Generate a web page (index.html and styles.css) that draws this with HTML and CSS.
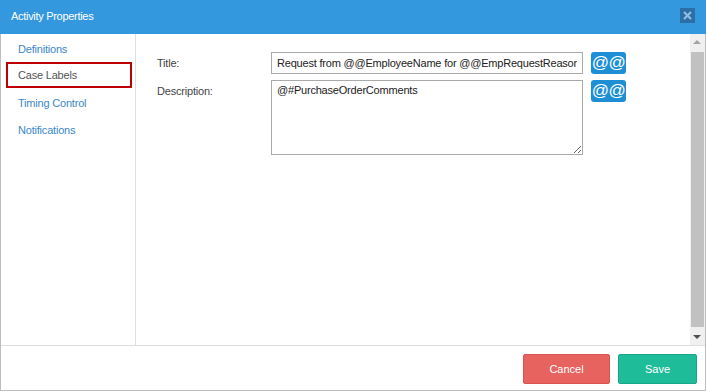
FILE: index.html
```html
<!DOCTYPE html>
<html>
<head>
<meta charset="utf-8">
<link rel="stylesheet" href="styles.css">
</head>
<body>
<div class="dialog">
  <div class="header">
    <span class="title">Activity Properties</span>
    <span class="close">
      <svg width="15" height="15" viewBox="0 0 15 15"><rect width="15" height="15" fill="#2c6ea6"/><path d="M4 4 L11 11 M11 4 L4 11" stroke="#8fbde6" stroke-width="2.2"/></svg>
    </span>
  </div>
  <div class="main">
    <div class="sidebar">
      <div class="nav-item">Definitions</div>
      <div class="nav-item active">Case Labels</div>
      <div class="nav-item">Timing Control</div>
      <div class="nav-item">Notifications</div>
    </div>
    <div class="content">
      <div class="form">
        <div class="row">
          <label class="label label-mid">Title:</label>
          <input class="field" type="text" value="Request from @@EmployeeName for @@EmpRequestReason">
          <button class="at-btn">@@</button>
        </div>
        <div class="row">
          <label class="label label-top">Description:</label>
          <textarea class="field area">@#PurchaseOrderComments</textarea>
          <button class="at-btn">@@</button>
        </div>
      </div>
    </div>
    <div class="scrollbar">
      <div class="arrow arrow-up"></div>
      <div class="thumb"></div>
      <div class="arrow arrow-down"></div>
    </div>
  </div>
  <div class="footer">
    <button class="btn btn-cancel">Cancel</button>
    <button class="btn btn-save">Save</button>
  </div>
</div>
</body>
</html>
```
FILE: styles.css
```css
* { box-sizing: border-box; }
html, body { margin: 0; padding: 0; background: #fff; }
body { font-family: "Liberation Sans", Arial, sans-serif; font-size: 11px; color: #333; }

.dialog {
  width: 706px;
  height: 391px;
  border: 1px solid #bdbdbd;
  border-top: none;
  display: flex;
  flex-direction: column;
}

.header {
  height: 34px;
  margin: 0 -1px;
  background: #3498df;
  display: flex;
  align-items: center;
  justify-content: space-between;
  padding: 0 11px 3px 11px;
  flex: none;
}
.title { color: #fff; font-size: 11px; letter-spacing: -0.3px; }
.close { display: flex; width: 15px; height: 15px; }

.main {
  flex: 1;
  display: flex;
  min-height: 0;
}

.sidebar {
  width: 135px;
  border-right: 1px solid #dedede;
  padding-top: 1px;
  flex: none;
}
.nav-item {
  height: 27px;
  display: flex;
  align-items: center;
  margin: 0 3px 0 5px;
  padding-left: 10px;
  border: 2px solid transparent;
  color: #3c87c8;
  letter-spacing: -0.2px;
}
.nav-item.active {
  border-color: #c00000;
  color: #555;
  height: 26px;
}
.nav-item.active + .nav-item { margin-top: 1px; }

.content {
  flex: 1;
  padding: 18px 0 0 21px;
}
.form { display: flex; flex-direction: column; gap: 6px; }
.row { display: flex; align-items: flex-start; }
.label {
  width: 114px;
  flex: none;
  color: #444;
  letter-spacing: -0.2px;
}
.label-mid { line-height: 22px; }
.label-top { line-height: 12px; padding-top: 5px; }

.field {
  width: 312px;
  height: 22px;
  border: 1px solid #a9a9a9;
  padding: 0 5px;
  font-family: "Liberation Sans", Arial, sans-serif;
  font-size: 11px;
  color: #222;
  letter-spacing: -0.2px;
  margin: 0;
  outline: none;
}
.area {
  height: 75px;
  padding: 3px 5px;
  resize: both;
}
.at-btn {
  margin: 0 0 0 8px;
  width: 35px;
  height: 22px;
  border: none;
  border-radius: 3px;
  background: #1f8fd5;
  color: #fff;
  font-family: "Liberation Sans", Arial, sans-serif;
  font-size: 17px;
  line-height: 22px;
  padding: 0;
  letter-spacing: -0.5px;
}

.scrollbar {
  width: 15px;
  flex: none;
  background: #f0f0f0;
  display: flex;
  flex-direction: column;
  align-items: center;
}
.arrow { width: 15px; height: 17px; flex: none; position: relative; }
.arrow-up::after, .arrow-down::after {
  content: "";
  position: absolute;
  left: 3px;
  border-left: 4px solid transparent;
  border-right: 4px solid transparent;
}
.arrow-up::after { top: 6px; border-bottom: 4px solid #a3a3a3; }
.arrow-down::after { top: 7px; border-top: 4px solid #505050; }
.thumb {
  flex: 1;
  width: 13px;
  background: #c1c1c1;
  margin: 1px 0;
}

.footer {
  height: 45px;
  flex: none;
  border-top: 1px solid #dedede;
  display: flex;
  justify-content: flex-end;
  align-items: flex-start;
  padding: 8px 8px 0 0;
  gap: 8px;
}
.btn {
  height: 30px;
  border-radius: 2px;
  color: #fff;
  font-family: "Liberation Sans", Arial, sans-serif;
  font-size: 11px;
  padding: 0;
}
.btn-cancel { width: 87px; background: #e6635f; border: 1px solid #d9534f; }
.btn-save { width: 79px; background: #1fbc9a; border: 1px solid #18a689; }
```
